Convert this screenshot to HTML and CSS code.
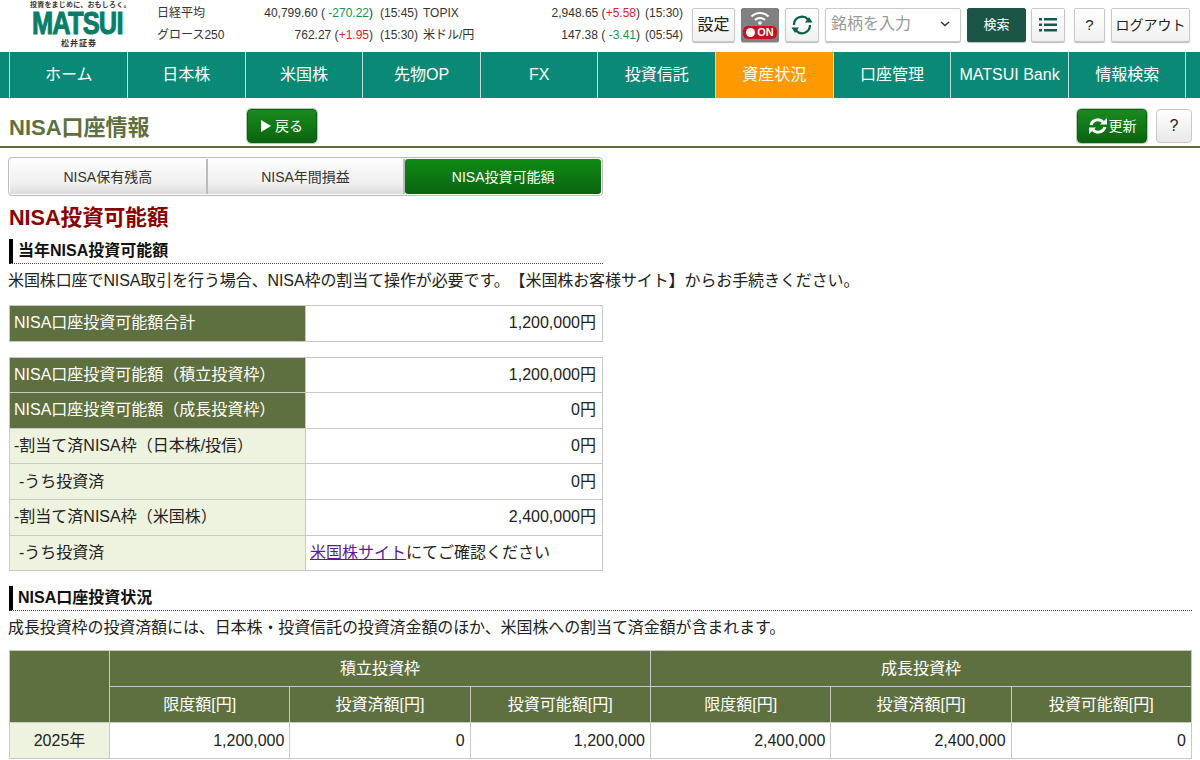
FILE: index.html
```html
<!DOCTYPE html>
<html lang="ja">
<head>
  <meta charset="UTF-8" />
  <title>NISA口座情報</title>
  <link rel="stylesheet" href="styles.css">
</head>
<body>
  <!-- HEADER -->
  <header class="top-bar">
    <div class="logo">
      <div class="logo-copy">投資をまじめに、おもしろく。</div>
      <div class="logo-main">MATSUI</div>
      <div class="logo-sub">松井証券</div>
    </div>
    <div class="ticker">
      <span>日経平均</span><span class="num">40,799.60 ( <em class="down">-270.22</em>)</span><span class="time">(15:45)</span>
      <span>TOPIX</span><span class="num">2,948.65 (<em class="up">+5.58</em>)</span><span class="time right">(15:30)</span>
      <span>グロース250</span><span class="num">762.27 (<em class="up">+1.95</em>)</span><span class="time">(15:30)</span>
      <span>米ドル/円</span><span class="num">147.38 ( <em class="down">-3.41</em>)</span><span class="time right">(05:54)</span>
    </div>
    <div class="tools">
      <button class="tool btn-setting">設定</button>
      <button class="tool btn-push">
        <svg width="20" height="14" viewBox="0 0 20 14"><g fill="none" stroke="#fff" stroke-width="2"><path d="M1.500 5.500a12 12 0 0 1 17 0"/><path d="M5 9a7 7 0 0 1 10 0"/></g><circle cx="10" cy="12" r="1.800" fill="#fff"/></svg>
        <span class="on-badge"><i></i>ON</span>
      </button>
      <button class="tool btn-reload">
        <svg width="22" height="22" viewBox="0 0 22 22"><g fill="none" stroke="#0d5f4b" stroke-width="2.200"><path d="M3 11a8 8 0 0 1 14-5.500"/><path d="M19 11a8 8 0 0 1-14 5.500"/></g><path d="M14 8.500h7.500L18 3zM8 13.500H.5L4 19z" fill="#0d5f4b"/></svg>
      </button>
      <div class="stock-input">銘柄を入力<svg width="10" height="6" viewBox="0 0 10 6"><path d="M1 1l4 3.500L9 1" fill="none" stroke="#333" stroke-width="1.500"/></svg></div>
      <button class="tool btn-search">検索</button>
      <button class="tool btn-list">
        <svg width="18" height="14" viewBox="0 0 18 14" fill="#0d5f4b"><path d="M0 0h3v2.500H0zM5 0h13v2.500H5zM0 5.500h3V8H0zM5 5.500h13V8H5zM0 11h3v2.500H0zM5 11h13v2.500H5z"/></svg>
      </button>
      <button class="tool btn-help">?</button>
      <button class="tool btn-logout">ログアウト</button>
    </div>
  </header>

  <!-- GLOBAL NAV -->
  <nav class="global-nav">
    <a href="#">ホーム</a>
    <a href="#">日本株</a>
    <a href="#">米国株</a>
    <a href="#">先物OP</a>
    <a href="#">FX</a>
    <a href="#">投資信託</a>
    <a href="#" class="active">資産状況</a>
    <a href="#">口座管理</a>
    <a href="#">MATSUI Bank</a>
    <a href="#">情報検索</a>
  </nav>

  <!-- MAIN CONTENT -->
  <main>
    <div class="page-title">
      <h1>NISA口座情報</h1>
      <a href="#" class="green-btn back-btn"><span class="tri"></span>戻る</a>
      <div class="title-right">
        <a href="#" class="green-btn update-btn">
          <svg width="20" height="18" viewBox="0 0 20 18"><g fill="none" stroke="#fff" stroke-width="3"><path d="M3 8a7 6.500 0 0 1 12-3"/><path d="M17 10a7 6.500 0 0 1-12 3"/></g><path d="M12 7.500h7V1zM8 10.500H1V17z" fill="#fff"/></svg>更新
        </a>
        <a href="#" class="help-btn">?</a>
      </div>
    </div>

    <div class="tabs">
      <a href="#">NISA保有残高</a>
      <a href="#">NISA年間損益</a>
      <a href="#" class="active">NISA投資可能額</a>
    </div>

    <h2 class="sub-title">NISA投資可能額</h2>

    <h3 class="section-head narrow">当年NISA投資可能額</h3>
    <p class="note">米国株口座でNISA取引を行う場合、NISA枠の割当て操作が必要です。【米国株お客様サイト】からお手続きください。</p>

    <table class="info-table first">
      <tr><th>NISA口座投資可能額合計</th><td>1,200,000円</td></tr>
    </table>

    <table class="info-table">
      <tr><th>NISA口座投資可能額（積立投資枠）</th><td>1,200,000円</td></tr>
      <tr><th>NISA口座投資可能額（成長投資枠）</th><td>0円</td></tr>
      <tr><th class="light">-割当て済NISA枠（日本株/投信）</th><td>0円</td></tr>
      <tr><th class="light indent">-うち投資済</th><td>0円</td></tr>
      <tr><th class="light">-割当て済NISA枠（米国株）</th><td>2,400,000円</td></tr>
      <tr><th class="light indent">-うち投資済</th><td class="left"><a href="#">米国株サイト</a>にてご確認ください</td></tr>
    </table>

    <h3 class="section-head">NISA口座投資状況</h3>
    <p class="note">成長投資枠の投資済額には、日本株・投資信託の投資済金額のほか、米国株への割当て済金額が含まれます。</p>

    <table class="status-table">
      <tr>
        <th rowspan="2" class="year-col"></th>
        <th colspan="3">積立投資枠</th>
        <th colspan="3">成長投資枠</th>
      </tr>
      <tr>
        <th>限度額[円]</th><th>投資済額[円]</th><th>投資可能額[円]</th>
        <th>限度額[円]</th><th>投資済額[円]</th><th>投資可能額[円]</th>
      </tr>
      <tr>
        <th class="light year">2025年</th>
        <td>1,200,000</td><td>0</td><td>1,200,000</td>
        <td>2,400,000</td><td>2,400,000</td><td>0</td>
      </tr>
    </table>
  </main>
</body>
</html>
```

FILE: styles.css
```css
/* ------------------------------------------------------------
   COLORS
------------------------------------------------------------ */
:root {
  --teal: #0a8a76;
  --olive: #5f7040;
  --olive-light: #eef3e0;
  --line: #c8c8c8;
  --text: #222;
}

/* ------------------------------------------------------------
   GLOBAL
------------------------------------------------------------ */
* {
  margin: 0;
  padding: 0;
  box-sizing: border-box;
}
html, body {
  height: 760px;
  overflow: hidden;
}
body {
  font-family: "Liberation Sans", "Noto Sans CJK JP", sans-serif;
  color: var(--text);
  background: #fff;
  font-size: 16px;
  line-height: 20px;
  text-spacing-trim: space-all;
}
a {
  color: inherit;
  text-decoration: none;
}
button {
  font-family: inherit;
  line-height: 20px;
}

/* ------------------------------------------------------------
   HEADER
------------------------------------------------------------ */
.top-bar {
  display: flex;
  height: 52px;
}
.logo {
  width: 157px;
  padding-left: 30px;
  text-align: center;
  flex: none;
}
.logo-copy {
  width: 97px;
  font-size: 7px;
  line-height: 9px;
  font-weight: bold;
  white-space: nowrap;
  letter-spacing: 0.2px;
  color: #333;
}
.logo-main {
  width: 94px;
  height: 24px;
  margin: 2px 0 0 2px;
  font-size: 31px;
  line-height: 25px;
  font-weight: bold;
  color: #0a7d68;
  letter-spacing: -1px;
  transform: scaleX(0.82);
  transform-origin: left top;
  white-space: nowrap;
  -webkit-text-stroke: 1px #0a7d68;
}
.logo-sub {
  width: 94px;
  margin: 4px 0 0 2px;
  font-size: 8px;
  line-height: 10px;
  font-weight: bold;
  letter-spacing: 1px;
  color: #333;
}
.ticker {
  width: 530px;
  flex: none;
  display: grid;
  grid-template-columns: 106px 110px 50px 80px 137px 47px;
  grid-auto-rows: 22px;
  padding-top: 2px;
  font-size: 12px;
  line-height: 22px;
  color: #333;
  white-space: nowrap;
}
.ticker .num {
  text-align: right;
}
.ticker .time {
  padding-left: 7px;
}
.ticker .time.right {
  padding-left: 5px;
}
.ticker em {
  font-style: normal;
}
.ticker .down {
  color: #17944f;
}
.ticker .up {
  color: #e0202c;
}
.tools {
  display: flex;
  align-items: flex-start;
  padding: 8px 0 0 5px;
}
.tool {
  height: 34px;
  margin-right: 6px;
  background: linear-gradient(#fff, #f1f1f1);
  border: 1px solid #c9c9c9;
  border-radius: 2px;
  box-shadow: 0 1px 1px #bbb;
  color: #222;
  display: flex;
  align-items: center;
  justify-content: center;
  flex: none;
}
.btn-setting {
  width: 43px;
  font-size: 16px;
}
.btn-push {
  width: 38px;
  background: #808080;
  border-color: #808080;
  flex-direction: column;
  gap: 1px;
}
.on-badge {
  display: flex;
  align-items: center;
  justify-content: center;
  gap: 2px;
  width: 34px;
  height: 13px;
  border-radius: 5px;
  background: #c8101e;
  color: #fff;
  font-size: 11px;
  font-weight: bold;
  line-height: 13px;
}
.on-badge i {
  width: 9px;
  height: 9px;
  border-radius: 50%;
  background: #fff;
}
.btn-reload {
  width: 34px;
}
.stock-input {
  width: 136px;
  height: 34px;
  margin-right: 6px;
  padding: 0 10px 2px 5px;
  border: 1px solid #c9c9c9;
  border-radius: 2px;
  box-shadow: 0 1px 1px #bbb;
  display: flex;
  align-items: center;
  justify-content: space-between;
  font-size: 16px;
  color: #999;
  flex: none;
}
.btn-search {
  width: 59px;
  margin-right: 5px;
  background: #1a5545;
  border-color: #1a5545;
  color: #fff;
  font-size: 13px;
}
.btn-list {
  width: 34px;
  margin-right: 9px;
}
.btn-help {
  width: 31px;
  font-size: 15px;
}
.btn-logout {
  width: 79px;
  margin-right: 0;
  font-size: 14px;
  white-space: nowrap;
}

/* ------------------------------------------------------------
   GLOBAL NAV
------------------------------------------------------------ */
.global-nav {
  display: flex;
  height: 46px;
  padding: 0 13.6px 0 9.4px;
  background: var(--teal);
}
.global-nav a {
  flex: 1 1 0;
  display: flex;
  align-items: center;
  justify-content: center;
  color: #fff;
  font-size: 16px;
  border-left: 1px solid #bfe0da;
  white-space: nowrap;
}
.global-nav a:last-child {
  border-right: 1px solid #bfe0da;
}
.global-nav a.active {
  background: #ff9900;
}

/* ------------------------------------------------------------
   PAGE TITLE
------------------------------------------------------------ */
.page-title {
  display: flex;
  align-items: center;
  height: 50px;
  margin: 0 0 9px;
  padding: 7px 8px 0 9px;
  border-bottom: 2px solid var(--olive);
}
.page-title h1 {
  width: 238px;
  padding-top: 4px;
  font-size: 22px;
  color: var(--olive);
}
.title-right {
  margin-left: auto;
  display: flex;
  gap: 9px;
}
.green-btn {
  height: 34px;
  display: flex;
  align-items: center;
  justify-content: center;
  border-radius: 4px;
  border: 1px solid #0c5f10;
  box-shadow: 0 0 0 1px #bcc9b8;
  background: linear-gradient(#1b8a1f, #0a6410);
  color: #fff;
  font-size: 14px;
}
.back-btn {
  width: 70px;
  gap: 4px;
}
.tri {
  border-left: 10px solid #fff;
  border-top: 6px solid transparent;
  border-bottom: 6px solid transparent;
}
.update-btn {
  width: 70px;
  gap: 1px;
}
.help-btn {
  width: 36px;
  height: 34px;
  display: flex;
  align-items: center;
  justify-content: center;
  border: 1px solid #c9c9c9;
  border-radius: 4px;
  background: linear-gradient(#fff, #e8e8e8);
  font-size: 16px;
}

/* ------------------------------------------------------------
   TABS
------------------------------------------------------------ */
.tabs {
  display: flex;
  width: 595px;
  height: 39px;
  margin-left: 8px;
  border: 1px solid #bbb;
  border-radius: 4px;
  padding: 1px;
  background: #fff;
}
.tabs a {
  flex: 1 1 0;
  display: flex;
  align-items: center;
  justify-content: center;
  font-size: 14px;
  color: #333;
  background: linear-gradient(#fdfdfd, #f0f0f0 70%, #dcdcdc);
  border-right: 2px solid #bbb;
}
.tabs a.active {
  background: linear-gradient(#0f8a14, #0a6410);
  color: #fff;
  border-right: 0;
  border-radius: 3px;
}

/* ------------------------------------------------------------
   CONTENT
------------------------------------------------------------ */
main {
  display: block;
}
.sub-title {
  margin: 10px 0 0 9px;
  height: 28px;
  font-size: 21.6px;
  line-height: 24px;
  color: #8b0000;
}
.section-head {
  margin: 7px 8px 0 9px;
  height: 25px;
  padding-left: 5px;
  border-left: 4px solid #000;
  border-bottom: 1px dotted #444;
  font-size: 16px;
  line-height: 23px;
  color: #111;
}
.section-head.narrow {
  width: 594px;
  margin-top: 5px;
}
.note {
  margin: 6px 0 0 8px;
  height: 24px;
  font-size: 16px;
  line-height: 22px;
  letter-spacing: -0.1px;
  color: #222;
  white-space: nowrap;
}
.info-table {
  width: 594px;
  margin: 15px 0 0 9px;
  border-collapse: collapse;
  table-layout: fixed;
}
.info-table.first {
  margin-top: 11px;
}
.info-table th, .info-table td {
  height: 35.6px;
  border: 1px solid var(--line);
  font-size: 16px;
  font-weight: normal;
  padding: 0 6px 0 4px;
  white-space: nowrap;
}
.info-table th {
  width: 296px;
  text-align: left;
  background: var(--olive);
  color: #fff;
}
.info-table td {
  text-align: right;
}
.info-table td.left {
  text-align: left;
}
.info-table td a {
  color: #5a1a9a;
  text-decoration: underline;
}
.info-table th.light, .status-table th.light {
  background: var(--olive-light);
  color: #222;
}
.info-table th.indent {
  padding-left: 9px;
}
.info-table + .section-head {
  margin-top: 15px;
}
.status-table {
  width: 1183px;
  margin: 9px 0 0 9px;
  border-collapse: collapse;
  table-layout: fixed;
}
.status-table th, .status-table td {
  height: 36px;
  border: 1px solid var(--line);
  font-size: 16px;
  font-weight: normal;
  padding: 0 5px;
}
.status-table th {
  background: var(--olive);
  color: #fff;
  text-align: center;
}
.status-table td {
  text-align: right;
}
.status-table .year-col {
  width: 100px;
}
```
